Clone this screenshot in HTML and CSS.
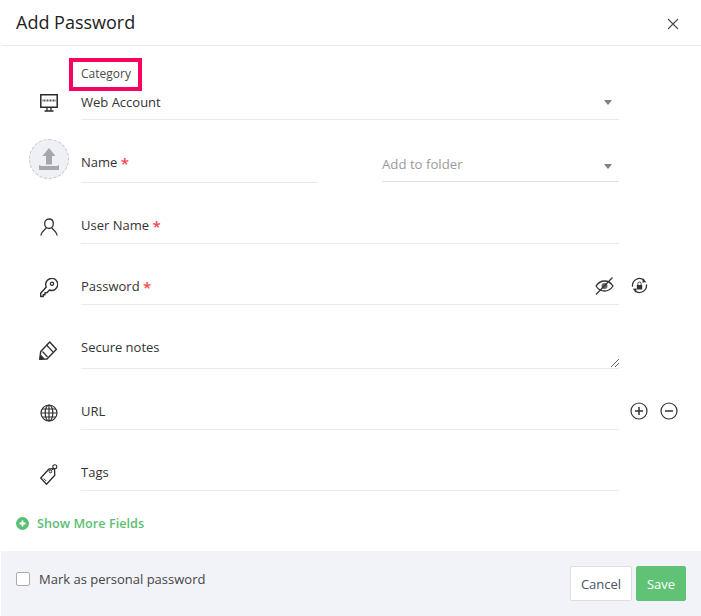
FILE: index.html
```html
<!DOCTYPE html>
<html lang="en">
<head>
<meta charset="utf-8">
<title>Add Password</title>
<link rel="stylesheet" href="styles.css">
</head>
<body>
<div class="dialog">
  <header class="head">
    <h1 class="title">Add Password</h1>
    <svg class="close" width="12" height="12" viewBox="0 0 12 12"><path d="M1 1l10 10M11 1L1 11" fill="none" stroke="#4a4a4a" stroke-width="1.1"/></svg>
  </header>
  <main class="form">
    <div class="row row-category">
      <span class="icon">
        <svg width="18" height="18" viewBox="0 0 18 18"><path d="M.8.8h16.400v12.400H.8z" fill="#fff" stroke="#2b2b2b" stroke-width="1.500"/><path d="M2.500 6.500h13" fill="none" stroke="#555" stroke-width="2.200" stroke-dasharray="1 .5"/><path d="M7 13v3.500M11 13v3.500M4.500 17h9" fill="none" stroke="#2b2b2b" stroke-width="1.300"/></svg>
      </span>
      <div class="field select"><span class="value">Web Account</span><i class="caret"></i></div>
      <div class="category-note"><span>Category</span></div>
    </div>
    <div class="row row-name">
      <span class="avatar">
        <svg width="20" height="22" viewBox="0 0 20 22"><path d="M10 0l6.500 8H13v8.500H7V8H3.500z" fill="#a3a8ac"/><path d="M0 17.500c0-.8 1.500-.8 1.500 0v.5h17v-.5c0-.8 1.500-.8 1.500 0V22H0z" fill="#a3a8ac"/></svg>
      </span>
      <div class="field field-name"><span class="value">Name <b class="req">*</b></span></div>
      <div class="field field-folder select"><span class="placeholder">Add to folder</span><i class="caret caret-low"></i></div>
    </div>
    <div class="row">
      <span class="icon">
        <svg width="18" height="18" viewBox="0 0 18 18"><path d="M9 1c2.800 0 4.300 2 4.300 4.500S11.800 10.500 9 10.500 4.700 8 4.700 5.500 6.200 1 9 1zM6.300 9.500C5.800 11.500 1.800 12.500 1 17M11.700 9.500c.5 2 4.500 3 5.300 7.500" fill="none" stroke="#333" stroke-width="1.300" stroke-linecap="round"/></svg>
      </span>
      <div class="field"><span class="value">User Name <b class="req">*</b></span></div>
    </div>
    <div class="row">
      <span class="icon">
        <svg width="18" height="20" viewBox="0 0 18 20"><path d="M6.300 9A6 6 0 1 1 9.500 12L6.800 14.800H5v1.900H3.200v1.800H.7v-3.200z" fill="none" stroke="#2f2f2f" stroke-width="1.400" stroke-linejoin="round"/><circle cx="12" cy="5.800" r="1.600" fill="none" stroke="#2f2f2f" stroke-width="1.300"/></svg>
      </span>
      <div class="field"><span class="value">Password <b class="req">*</b></span>
        <svg class="eye" width="19" height="18" viewBox="0 0 19 18"><path d="M1 9c2-3 5-5 8.500-5S16 6 18 9c-2 3-5 5-8.500 5S3 12 1 9z" fill="none" stroke="#333" stroke-width="1.300"/><circle cx="9.500" cy="9" r="3" fill="#666"/><path d="M1 17.500L17.500.5" stroke="#333" stroke-width="1.200"/></svg>
      </div>
      <span class="side side-one">
        <svg width="17" height="17" viewBox="0 0 17 17"><path d="M1.600 9.700A7 7 0 0 1 13 3.200M15.400 7.300A7 7 0 0 1 4 13.800" fill="none" stroke="#333" stroke-width="1.300"/><path d="M12 1.200l3.300 4-4 .4zM5 15.800l-3.300-4 4-.4z" fill="#333"/><path d="M5.800 8h5.400v4.500H5.800z" fill="#333"/><path d="M6.900 8V6.600a1.600 1.600 0 0 1 3.200 0V8" fill="none" stroke="#333" stroke-width=".9"/></svg>
      </span>
    </div>
    <div class="row row-notes">
      <span class="icon">
        <svg width="19" height="19" viewBox="0 0 19 19"><path d="M1.700 10.500L10.700 1l6.700 7.200L8 18 .7 18.300z" fill="none" stroke="#2f2f2f" stroke-width="1.400" stroke-linejoin="round"/><path d="M7.500 4l6.700 7.200M3.500 10.500l5 5.500" fill="none" stroke="#2f2f2f" stroke-width="1.200"/><path d="M.7 18.300l.8-5 4.300 4.500z" fill="#2f2f2f"/></svg>
      </span>
      <div class="field field-notes"><span class="value">Secure notes</span>
        <svg class="grip" width="8" height="8" viewBox="0 0 8 8"><path d="M0 8l8-8M4 8l4-4" stroke="#666" stroke-width="1"/></svg>
      </div>
    </div>
    <div class="row">
      <span class="icon">
        <svg width="18" height="18" viewBox="0 0 18 18"><g fill="none" stroke="#2f2f2f" stroke-width="1.200"><circle cx="9" cy="9" r="8"/><ellipse cx="9" cy="9" rx="3.800" ry="8"/><path d="M9 1v16M1 9h16M2 5h14M2 13h14"/></g></svg>
      </span>
      <div class="field"><span class="value">URL</span></div>
      <span class="side side-two">
        <svg width="18" height="18" viewBox="0 0 18 18"><circle cx="9" cy="9" r="8" fill="none" stroke="#333" stroke-width="1.200"/><path d="M5 9h8M9 5v8" stroke="#333" stroke-width="1.500"/></svg>
        <svg width="18" height="18" viewBox="0 0 18 18"><circle cx="9" cy="9" r="8" fill="none" stroke="#333" stroke-width="1.200"/><path d="M5 9h8" stroke="#333" stroke-width="1.500"/></svg>
      </span>
    </div>
    <div class="row">
      <span class="icon">
        <svg width="18" height="21" viewBox="0 0 18 21"><path d="M.7 14L9 5l5.500-.3.300 6.600L6.500 20.300z" fill="none" stroke="#2f2f2f" stroke-width="1.300" stroke-linejoin="round"/><circle cx="10.500" cy="7.500" r="1.300" fill="none" stroke="#2f2f2f" stroke-width="1"/><path d="M11.500 6.500L14 4" stroke="#2f2f2f" stroke-width="1"/><circle cx="14.800" cy="2.800" r="2" fill="none" stroke="#2f2f2f" stroke-width="1.100"/><path d="M3.700 14.500l2.500 2.500" stroke="#2f2f2f" stroke-width="1"/></svg>
      </span>
      <div class="field"><span class="value">Tags</span></div>
    </div>
    <a class="more" href="#">
      <svg width="13" height="13" viewBox="0 0 13 13"><circle cx="6.500" cy="6.500" r="6.500" fill="#5bbf73"/><path d="M3.500 6.500h6M6.500 3.500v6" stroke="#fff" stroke-width="1.800"/></svg>
      Show More Fields
    </a>
  </main>
  <footer class="foot">
    <label class="personal"><span class="check"></span>Mark as personal password</label>
    <div class="actions">
      <button class="btn btn-cancel" type="button">Cancel</button>
      <button class="btn btn-save" type="button">Save</button>
    </div>
  </footer>
</div>
</body>
</html>
```
FILE: styles.css
```css
* { box-sizing: border-box; }
html, body { margin: 0; height: 100%; }
body {
  background: #fff;
  font-family: "Open Sans", "Noto Sans", sans-serif;
  font-size: 13px;
  color: #333;
}
.dialog {
  width: 700px;
  height: 616px;
  margin-left: 1px;
  display: flex;
  flex-direction: column;
  background: #fff;
}
.head {
  height: 46px;
  flex: none;
  display: flex;
  align-items: center;
  justify-content: space-between;
  padding: 0 22px 0 15px;
  border-bottom: 1px solid #e8e9ec;
}
.title {
  margin: 0 0 2px;
  font-size: 18px;
  font-weight: 400;
  line-height: 42px;
  color: #222;
}
.close { display: block; margin-top: 3px; }
.form { flex: 1; display: flex; flex-direction: column; position: relative; }
.row {
  position: relative;
  height: 61px;
  flex: none;
  display: flex;
  align-items: flex-end;
  padding-left: 80px;
}
.row-category { height: 74px; }
.row-name { height: 63px; gap: 65px; }
.row-notes { height: 64px; }
.icon {
  position: absolute;
  left: 28px;
  bottom: 6px;
  width: 39px;
  height: 22px;
  display: flex;
  align-items: center;
  justify-content: center;
}
.row-notes .icon { bottom: 8px; }
.avatar {
  position: absolute;
  left: 28px;
  top: 19px;
  width: 40px;
  height: 40px;
  border-radius: 50%;
  background: #eff0f5;
  border: 1px dashed #c6c8cd;
  display: flex;
  align-items: center;
  justify-content: center;
}
.field {
  width: 538px;
  height: 36px;
  flex: none;
  display: flex;
  align-items: center;
  justify-content: space-between;
  padding-bottom: 1px;
  border-bottom: 1px solid #e9eaef;
  position: relative;
}
.row-category .field { padding-top: 1px; padding-bottom: 0; }
.value { line-height: 20px; }
.req { color: #f5454f; font-weight: 600; font-size: 15px; line-height: 0; vertical-align: -2px; }
.field-name { width: 236px; height: 40px; padding-bottom: 2px; }
.field-folder { width: 237px; height: 40px; margin-bottom: 1px; border-bottom-color: #dfe0e4; padding-top: 4px; padding-bottom: 0; }
.field-notes { padding-bottom: 8px; }
.placeholder { color: #9a9a9a; font-size: 13.200px; }
.caret {
  display: block;
  width: 0;
  height: 0;
  margin-right: 7px;
  border-left: 4px solid transparent;
  border-right: 4px solid transparent;
  border-top: 5px solid #808080;
}
.caret-low { margin-top: 6px; }
.eye { position: absolute; right: 5px; top: 8px; }
.grip { position: absolute; right: 0; bottom: 1px; }
.side {
  position: absolute;
  display: flex;
  gap: 12px;
}
.side-one { left: 630px; bottom: 11px; }
.side-two { left: 629px; bottom: 10px; }
.category-note {
  position: absolute;
  left: 68px;
  top: 12px;
  width: 73px;
  height: 33px;
  border: 4px solid #f5055f;
  font-size: 12px;
  color: #4a4a4a;
  padding: 3px 0 0 8px;
  line-height: 18px;
}
.more {
  display: flex;
  align-items: center;
  gap: 8px;
  margin: 23px 0 0 15px;
  color: #5bbf73;
  font-size: 12.700px;
  font-weight: 600;
  line-height: 18px;
  text-decoration: none;
}
.foot {
  height: 65px;
  flex: none;
  background: #f2f3f9;
  display: flex;
  align-items: center;
  justify-content: space-between;
  padding: 0 15px;
}
.personal { display: flex; align-items: center; gap: 9px; color: #444; margin-top: -9px; }
.check {
  width: 14px;
  height: 14px;
  background: #fff;
  border: 1px solid #a9abb0;
  border-radius: 2px;
}
.actions { display: flex; gap: 4px; }
.btn {
  height: 35px;
  border-radius: 2px;
  font-family: inherit;
  font-size: 13px;
  padding: 0;
}
.btn-cancel {
  width: 62px;
  background: #fff;
  border: 1px solid #dcdde6;
  color: #4a5163;
}
.btn-save {
  width: 50px;
  background: #5fc275;
  border: 1px solid #5fc275;
  color: #fff;
  font-weight: 500;
}
```
